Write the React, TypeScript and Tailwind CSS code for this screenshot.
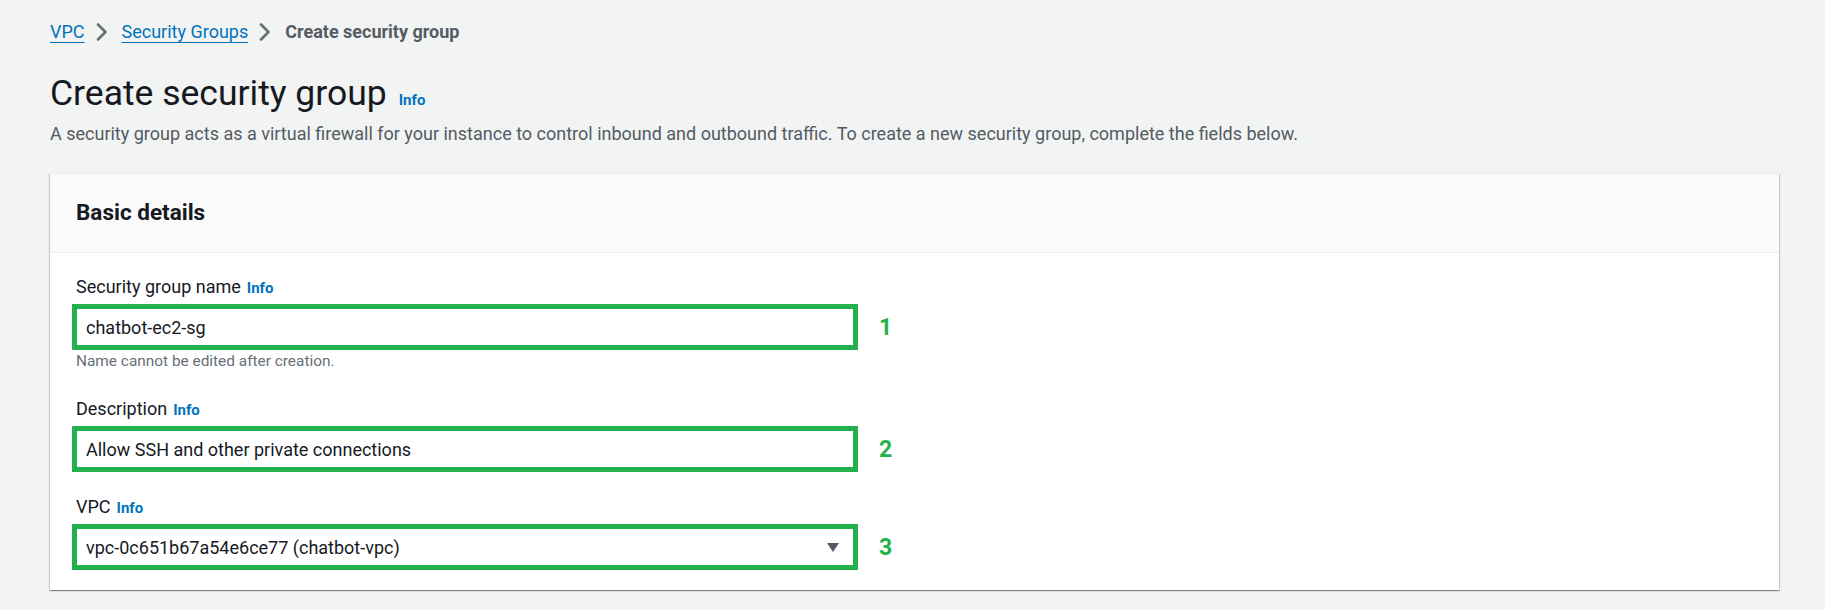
const font = { fontFamily: 'Roboto, "Noto Sans", sans-serif' };

function Info({ className = 'ml-[6px]' }: { className?: string }) {
  return <span className={`${className} text-[15px] font-bold leading-none text-[#0073bb]`}>Info</span>;
}

function Chevron() {
  return (
    <svg width="12" height="18" viewBox="0 0 12 18" className="ml-[11px] mr-[14px]" fill="none">
      <path d="M2 1.5 9.5 9 2 16.5" stroke="#687078" strokeWidth="2.6" strokeLinecap="round" strokeLinejoin="round" />
    </svg>
  );
}

function Field({ label, value, num, hint, select }: { label: string; value: string; num: string; hint?: string; select?: boolean }) {
  return (
    <div className="flex flex-col">
      <div className="text-[18px] leading-[22px] text-[#16191f]">
        {label}
        <Info />
      </div>
      <div className="mt-[6px] flex items-center">
        <div className="-ml-1 flex h-[46px] w-[786px] items-center justify-between border-[5px] border-[#22b14c] bg-white pl-[9px] pr-[14px] text-[18px] text-[#16191f]">
          <span>{value}</span>
          {select && (
            <svg width="12" height="9" viewBox="0 0 12 9">
              <path d="M0 0h12L6 9z" fill="#545b64" />
            </svg>
          )}
        </div>
        <span className="ml-[21px] text-[23px] font-bold leading-none text-[#22b14c]">{num}</span>
      </div>
      {hint && <div className="mt-[1px] text-[15.4px] leading-[20px] text-[#687078]">{hint}</div>}
    </div>
  );
}

export default function App() {
  return (
    <div className="min-h-[610px] bg-[#f2f3f3] px-[50px] pt-[21px]" style={font}>
      {/* breadcrumbs */}
      <nav className="flex items-center text-[18px] leading-[22px]">
        <a className="text-[#0073bb] underline underline-offset-[4px]">VPC</a>
        <Chevron />
        <a className="text-[#0073bb] underline underline-offset-[4px]">Security Groups</a>
        <Chevron />
        <span className="font-bold text-[#545b64]">Create security group</span>
      </nav>

      <h1 className="mt-[28px] text-[35.5px] leading-[44px] text-[#16191f]">
        Create security group
        <Info className="ml-[12px]" />
      </h1>
      <p className="mt-[8px] text-[18px] leading-[22px] text-[#545b64]">
        A security group acts as a virtual firewall for your instance to control inbound and outbound traffic. To create a new security group, complete the fields below.
      </p>

      {/* Basic details card */}
      <div className="mt-[28px] w-[1729px] bg-white shadow-[0_1px_1px_0_rgba(0,28,36,0.3),1px_1px_1px_0_rgba(0,28,36,0.15),-1px_1px_1px_0_rgba(0,28,36,0.15)]">
        <div className="flex h-[80px] items-center border-y border-[#eaeded] bg-[#fafafa] px-[26px]">
          <h2 className="text-[22.5px] font-bold text-[#16191f]">Basic details</h2>
        </div>
        <div className="flex flex-col px-[26px] pb-[20px] pt-[23px]">
          <Field label="Security group name" value="chatbot-ec2-sg" num="1" hint="Name cannot be edited after creation." />
          <div className="mt-[27px]">
            <Field label="Description" value="Allow SSH and other private connections" num="2" />
          </div>
          <div className="mt-[24px]">
            <Field label="VPC" value="vpc-0c651b67a54e6ce77 (chatbot-vpc)" num="3" select />
          </div>
        </div>
      </div>
    </div>
  );
}
